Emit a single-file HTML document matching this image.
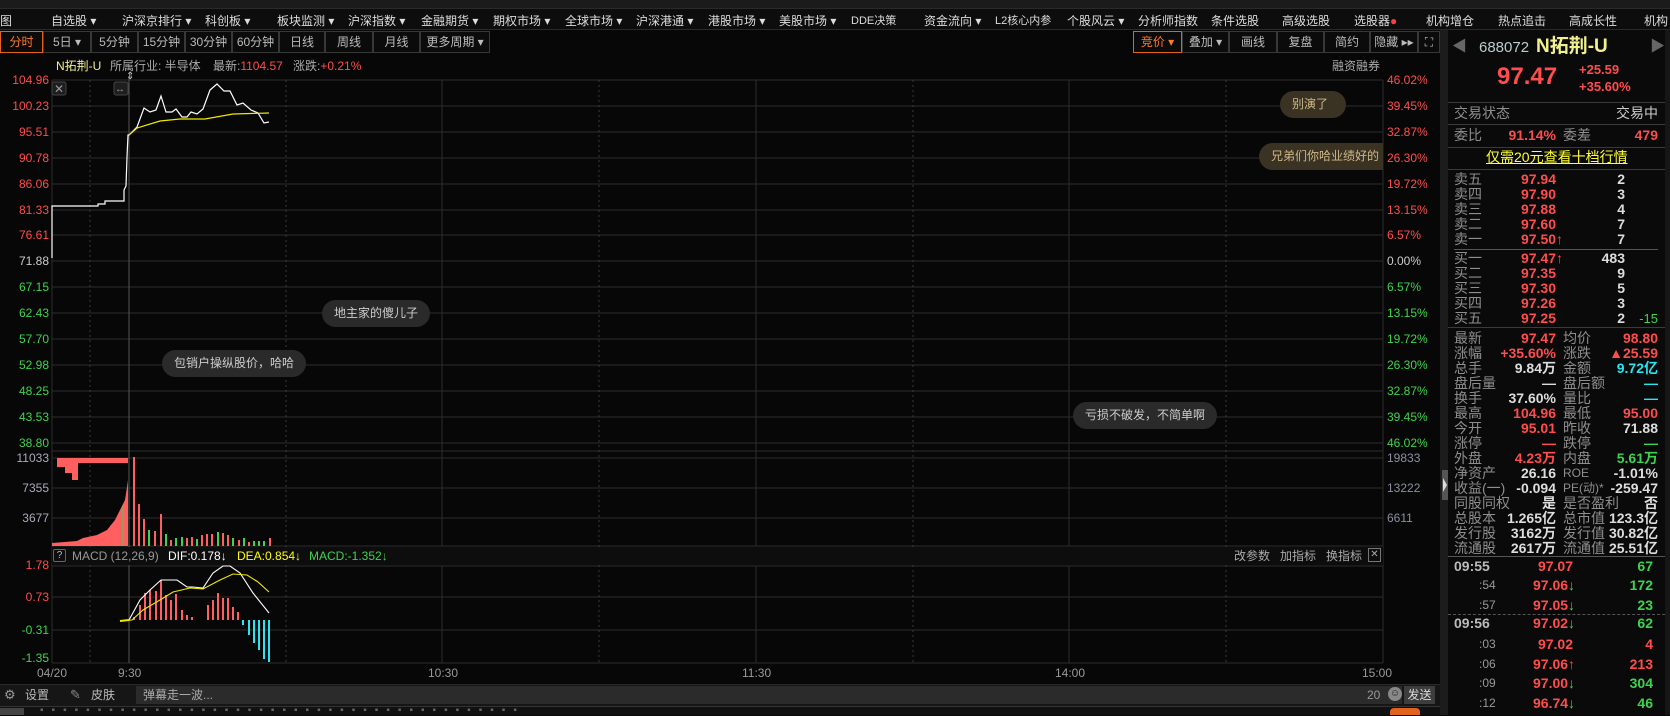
<!DOCTYPE html>
<html><head><meta charset="utf-8">
<style>
*{margin:0;padding:0;box-sizing:border-box}
body{width:1670px;height:715px;background:#070707;overflow:hidden;position:relative;font-family:"Liberation Sans","Noto Sans CJK SC",sans-serif;font-size:12px;color:#bbb}
.a{position:absolute;white-space:nowrap;line-height:14px}
.m{position:absolute;top:12px;color:#ddd;font-size:12px;white-space:nowrap}
.tb{position:absolute;top:31px;height:22px;border:1px solid #383838;color:#bbb;font-size:12px;text-align:center;line-height:20px;background:#0b0b0b}
.r{color:#ff4d4d}.g{color:#3ed34e}.w{color:#ddd}.y{color:#ffff00}.c{color:#27e6f2}.gr{color:#999}
.L{position:absolute;right:1621px;font-size:12px;line-height:14px;text-align:right}
.P{position:absolute;left:1387px;font-size:12px;line-height:14px}
.bub{position:absolute;height:27px;border-radius:14px;background:#2a2a2a;color:#ccc;font-size:12px;line-height:27px;padding:0 12px;white-space:nowrap;overflow:hidden}
.bb{background:#3a3223;color:#cdb888}
.rp{position:absolute;font-size:14px;line-height:15px;white-space:nowrap}
.lb{color:#8e8e8e;left:1454px}
.v1{right:114px;font-weight:bold}
.l2{color:#8e8e8e;left:1563px}
.v2{right:12px;font-weight:bold}
.tk{position:absolute;font-size:14px;font-weight:bold;line-height:16px;white-space:nowrap}
</style></head><body>
<div style="position:absolute;left:0;top:0;width:1670px;height:9px;background:#1b1b1b;border-bottom:1px solid #2a2a2a"></div>
<div style="position:absolute;left:0;top:9px;width:1670px;height:21px;background:#0d0d0d;border-bottom:1px solid #2a2a2a"></div>
<div class="m" style="left:0">图</div>
<div class="m" style="left:51px">自选股 ▾</div>
<div class="m" style="left:122px">沪深京排行 ▾</div>
<div class="m" style="left:205px">科创板 ▾</div>
<div class="m" style="left:277px">板块监测 ▾</div>
<div class="m" style="left:348px">沪深指数 ▾</div>
<div class="m" style="left:421px">金融期货 ▾</div>
<div class="m" style="left:493px">期权市场 ▾</div>
<div class="m" style="left:565px">全球市场 ▾</div>
<div class="m" style="left:636px">沪深港通 ▾</div>
<div class="m" style="left:708px">港股市场 ▾</div>
<div class="m" style="left:779px">美股市场 ▾</div>
<div class="m" style="left:851px;font-size:11px">DDE决策</div>
<div class="m" style="left:924px">资金流向 ▾</div>
<div class="m" style="left:995px;font-size:11px">L2核心内参</div>
<div class="m" style="left:1067px">个股风云 ▾</div>
<div class="m" style="left:1138px">分析师指数</div>
<div class="m" style="left:1211px">条件选股</div>
<div class="m" style="left:1282px">高级选股</div>
<div class="m" style="left:1354px">选股器<span style="color:#ff3b3b">●</span></div>
<div class="m" style="left:1426px">机构增仓</div>
<div class="m" style="left:1498px">热点追击</div>
<div class="m" style="left:1569px">高成长性</div>
<div class="m" style="left:1644px">机构</div>
<div class="tb" style="left:0;width:43px;border-color:#e2631c;color:#ff7a2a">分时</div>
<div class="tb" style="left:43px;width:48px">5日 ▾</div>
<div class="tb" style="left:91px;width:47px">5分钟</div>
<div class="tb" style="left:138px;width:47px">15分钟</div>
<div class="tb" style="left:185px;width:47px">30分钟</div>
<div class="tb" style="left:232px;width:47px">60分钟</div>
<div class="tb" style="left:279px;width:46px">日线</div>
<div class="tb" style="left:325px;width:48px">周线</div>
<div class="tb" style="left:373px;width:47px">月线</div>
<div class="tb" style="left:420px;width:70px">更多周期 ▾</div>
<div class="tb" style="left:1133px;width:49px;border-color:#e2631c;color:#ff7a2a">竞价 ▾</div>
<div class="tb" style="left:1182px;width:47px">叠加 ▾</div>
<div class="tb" style="left:1229px;width:48px">画线</div>
<div class="tb" style="left:1277px;width:47px">复盘</div>
<div class="tb" style="left:1324px;width:46px">简约</div>
<div class="tb" style="left:1370px;width:48px">隐藏 ▸▸</div>
<div class="tb" style="left:1418px;width:22px">⛶</div>
<div class="a" style="left:56px;top:59px;color:#f2f08a">N拓荆-U</div>
<div class="a" style="left:110px;top:59px;color:#aaa">所属行业: 半导体</div>
<div class="a" style="left:213px;top:59px;color:#aaa">最新:<span class="r">1104.57</span></div>
<div class="a" style="left:293px;top:59px;color:#aaa">涨跌:<span class="r">+0.21%</span></div>
<div class="a" style="left:1332px;top:59px;color:#aaa">融资融券</div>

<svg width="1670" height="715" style="position:absolute;left:0;top:0">
<g stroke="#2c2c2c" stroke-width="1" shape-rendering="crispEdges">
<line x1="52" y1="80" x2="1383" y2="80"/><line x1="52" y1="106" x2="1383" y2="106"/><line x1="52" y1="132" x2="1383" y2="132"/><line x1="52" y1="158" x2="1383" y2="158"/><line x1="52" y1="184" x2="1383" y2="184"/><line x1="52" y1="210" x2="1383" y2="210"/><line x1="52" y1="235" x2="1383" y2="235"/><line x1="52" y1="261" x2="1383" y2="261"/><line x1="52" y1="287" x2="1383" y2="287"/><line x1="52" y1="313" x2="1383" y2="313"/><line x1="52" y1="339" x2="1383" y2="339"/><line x1="52" y1="365" x2="1383" y2="365"/><line x1="52" y1="391" x2="1383" y2="391"/><line x1="52" y1="417" x2="1383" y2="417"/><line x1="52" y1="443" x2="1383" y2="443"/>
<line x1="52" y1="451" x2="1383" y2="451"/>
<line x1="52" y1="458" x2="1383" y2="458"/><line x1="52" y1="488" x2="1383" y2="488"/><line x1="52" y1="518" x2="1383" y2="518"/><line x1="52" y1="546" x2="1383" y2="546"/>
<line x1="52" y1="566" x2="1383" y2="566"/><line x1="52" y1="597" x2="1383" y2="597"/><line x1="52" y1="630" x2="1383" y2="630"/><line x1="52" y1="663" x2="1383" y2="663"/>
<line x1="52" y1="80" x2="52" y2="663"/><line x1="1383" y1="80" x2="1383" y2="663"/>
<line x1="442" y1="80" x2="442" y2="546"/><line x1="442" y1="566" x2="442" y2="663"/>
<line x1="756" y1="80" x2="756" y2="546"/><line x1="756" y1="566" x2="756" y2="663"/>
<line x1="1069" y1="80" x2="1069" y2="546"/><line x1="1069" y1="566" x2="1069" y2="663"/>
</g>
<g stroke="#3a3a3a" stroke-dasharray="2,3" stroke-width="1" shape-rendering="crispEdges">
<line x1="90" y1="80" x2="90" y2="663"/><line x1="286" y1="80" x2="286" y2="663"/><line x1="599" y1="80" x2="599" y2="663"/><line x1="913" y1="80" x2="913" y2="663"/><line x1="1226" y1="80" x2="1226" y2="663"/>
</g>
<line x1="129" y1="76" x2="129" y2="663" stroke="#555" shape-rendering="crispEdges"/>
<rect x="52" y="547" width="1331" height="18" fill="#0d0d0d"/>
<polyline fill="none" stroke="#fff" stroke-width="1.2" points="52,258 52,206 98,206 98,204 105,204 105,201 124,201 124,190 126,186 127,157 128,135 129,135 137,127 144,108 150,112 156,110 161,96 166,112 172,112 176,109 182,117 187,117 191,112 197,114 203,109 210,90 217,84 224,91 230,91 237,105 243,103 251,110 258,113 264,123 269,122"/>
<polyline fill="none" stroke="#f0e800" stroke-width="1.2" points="129,135 137,128 160,121 180,119 205,119 233,114 269,113"/>
<rect x="52" y="82" width="14" height="13" rx="2" fill="#1e1e1e" stroke="#444"/>
<text x="54" y="93" fill="#999" font-size="12">✕</text>
<rect x="114" y="82" width="14" height="13" rx="2" fill="#1e1e1e" stroke="#444"/>
<text x="115" y="92" fill="#999" font-size="10">↔</text>
<text x="126" y="79" fill="#ccc" font-size="10">⇕</text>
<polygon fill="#ff5f5f" points="57,458 128,458 128,463 78,463 78,480 72,480 72,473 65,473 65,467 57,467"/>
<polygon fill="#ff5f5f" points="52,546 52,543 77,541 83,538 97,535 107,530 115,520 120,510 125,500 127,487 128,480 128,546"/>
<line x1="123" y1="546" x2="123" y2="505" stroke="#3ed34e"/>
<g stroke-width="1.6" shape-rendering="crispEdges">
<line x1="134" y1="546" x2="134" y2="457" stroke="#ff5f5f"/><line x1="139" y1="546" x2="139" y2="504" stroke="#ff5f5f"/><line x1="144" y1="546" x2="144" y2="519" stroke="#ff5f5f"/><line x1="149" y1="546" x2="149" y2="530" stroke="#3ed34e"/><line x1="155" y1="546" x2="155" y2="531" stroke="#ff5f5f"/><line x1="161" y1="546" x2="161" y2="514" stroke="#ff5f5f"/><line x1="166" y1="546" x2="166" y2="534" stroke="#3ed34e"/><line x1="171" y1="546" x2="171" y2="540" stroke="#ff5f5f"/><line x1="176" y1="546" x2="176" y2="538" stroke="#3ed34e"/><line x1="182" y1="546" x2="182" y2="537" stroke="#3ed34e"/><line x1="187" y1="546" x2="187" y2="538" stroke="#ff5f5f"/><line x1="192" y1="546" x2="192" y2="537" stroke="#ff5f5f"/><line x1="197" y1="546" x2="197" y2="539" stroke="#3ed34e"/><line x1="202" y1="546" x2="202" y2="535" stroke="#ff5f5f"/><line x1="207" y1="546" x2="207" y2="534" stroke="#ff5f5f"/><line x1="212" y1="546" x2="212" y2="534" stroke="#ff5f5f"/><line x1="218" y1="546" x2="218" y2="532" stroke="#3ed34e"/><line x1="223" y1="546" x2="223" y2="533" stroke="#ff5f5f"/><line x1="228" y1="546" x2="228" y2="535" stroke="#ff5f5f"/><line x1="233" y1="546" x2="233" y2="538" stroke="#3ed34e"/><line x1="239" y1="546" x2="239" y2="540" stroke="#ff5f5f"/><line x1="244" y1="546" x2="244" y2="538" stroke="#3ed34e"/><line x1="249" y1="546" x2="249" y2="542" stroke="#ff5f5f"/><line x1="254" y1="546" x2="254" y2="541" stroke="#3ed34e"/><line x1="259" y1="546" x2="259" y2="541" stroke="#3ed34e"/><line x1="264" y1="546" x2="264" y2="541" stroke="#3ed34e"/><line x1="270" y1="546" x2="270" y2="538" stroke="#ff5f5f"/>
</g>
<g stroke-width="1.6" shape-rendering="crispEdges" stroke="#ff5f5f">
<line x1="134" y1="620" x2="134" y2="617"/><line x1="140" y1="620" x2="140" y2="605"/><line x1="145" y1="620" x2="145" y2="593"/><line x1="150" y1="620" x2="150" y2="590"/><line x1="156" y1="620" x2="156" y2="591"/><line x1="161" y1="620" x2="161" y2="580"/><line x1="166" y1="620" x2="166" y2="595"/><line x1="171" y1="620" x2="171" y2="600"/><line x1="176" y1="620" x2="176" y2="594"/><line x1="182" y1="620" x2="182" y2="610"/><line x1="187" y1="620" x2="187" y2="615"/><line x1="192" y1="620" x2="192" y2="617"/><line x1="208" y1="620" x2="208" y2="605"/><line x1="213" y1="620" x2="213" y2="600"/><line x1="218" y1="620" x2="218" y2="593"/><line x1="223" y1="620" x2="223" y2="598"/><line x1="228" y1="620" x2="228" y2="598"/><line x1="233" y1="620" x2="233" y2="607"/><line x1="238" y1="620" x2="238" y2="612"/>
</g>
<g stroke-width="1.6" shape-rendering="crispEdges" stroke="#27e6f2">
<line x1="243" y1="620" x2="243" y2="625"/><line x1="249" y1="620" x2="249" y2="635"/><line x1="254" y1="620" x2="254" y2="643"/><line x1="259" y1="620" x2="259" y2="650"/><line x1="264" y1="620" x2="264" y2="659"/><line x1="269" y1="620" x2="269" y2="662"/>
</g>
<polyline fill="none" stroke="#fff" stroke-width="1.1" points="129,620 140,600 150,590 161,580 177,580 187,587 193,587 203,588 213,573 223,566 230,566 240,573 253,593 269,613"/>
<polyline fill="none" stroke="#f0e800" stroke-width="1.1" points="120,621 132,620 143,610 160,600 173,592 190,588 203,589 220,580 233,574 247,575 258,582 269,592"/>
<line x1="120" y1="621" x2="129" y2="620" stroke="#f0e800" stroke-width="2"/>
<rect x="1440" y="30" width="8" height="685" fill="#1c1c1c"/>
<rect x="1442" y="470" width="6" height="30" fill="#555"/>
<polygon points="1443,478 1447,485 1443,492" fill="#ddd"/>
<rect x="1665" y="30" width="5" height="685" fill="#161616"/>
</svg>
<div class="a" style="left:53px;top:549px;width:13px;height:13px;border:1px solid #666;border-radius:2px;color:#bbb;font-size:10px;line-height:11px;text-align:center">?</div>
<div class="a" style="left:72px;top:549px;color:#999">MACD (12,26,9)</div>
<div class="a" style="left:168px;top:549px;color:#fff">DIF:0.178↓</div>
<div class="a" style="left:237px;top:549px;color:#ffff00">DEA:0.854↓</div>
<div class="a" style="left:309px;top:549px;color:#3ed34e">MACD:-1.352↓</div>
<div class="a" style="left:1234px;top:549px;color:#aaa">改参数</div>
<div class="a" style="left:1280px;top:549px;color:#aaa">加指标</div>
<div class="a" style="left:1326px;top:549px;color:#aaa">换指标</div>
<div class="a" style="left:1368px;top:548px;width:13px;height:14px;border:1px solid #777;color:#aaa;font-size:10px;text-align:center;line-height:12px">✕</div>
<div class="L r" style="top:73px">104.96</div>
<div class="L r" style="top:99px">100.23</div>
<div class="L r" style="top:125px">95.51</div>
<div class="L r" style="top:151px">90.78</div>
<div class="L r" style="top:177px">86.06</div>
<div class="L r" style="top:203px">81.33</div>
<div class="L r" style="top:228px">76.61</div>
<div class="L" style="top:254px;color:#ccc">71.88</div>
<div class="L g" style="top:280px">67.15</div>
<div class="L g" style="top:306px">62.43</div>
<div class="L g" style="top:332px">57.70</div>
<div class="L g" style="top:358px">52.98</div>
<div class="L g" style="top:384px">48.25</div>
<div class="L g" style="top:410px">43.53</div>
<div class="L g" style="top:436px">38.80</div>
<div class="L" style="top:451px;color:#aab">11033</div>
<div class="L" style="top:481px;color:#aab">7355</div>
<div class="L" style="top:511px;color:#aab">3677</div>
<div class="L r" style="top:558px">1.78</div>
<div class="L r" style="top:590px">0.73</div>
<div class="L g" style="top:623px">-0.31</div>
<div class="L g" style="top:651px">-1.35</div>
<div class="P r" style="top:73px">46.02%</div>
<div class="P r" style="top:99px">39.45%</div>
<div class="P r" style="top:125px">32.87%</div>
<div class="P r" style="top:151px">26.30%</div>
<div class="P r" style="top:177px">19.72%</div>
<div class="P r" style="top:203px">13.15%</div>
<div class="P r" style="top:228px">6.57%</div>
<div class="P" style="top:254px;color:#ccc">0.00%</div>
<div class="P g" style="top:280px">6.57%</div>
<div class="P g" style="top:306px">13.15%</div>
<div class="P g" style="top:332px">19.72%</div>
<div class="P g" style="top:358px">26.30%</div>
<div class="P g" style="top:384px">32.87%</div>
<div class="P g" style="top:410px">39.45%</div>
<div class="P g" style="top:436px">46.02%</div>
<div class="P" style="top:451px;color:#8a90a0">19833</div>
<div class="P" style="top:481px;color:#8a90a0">13222</div>
<div class="P" style="top:511px;color:#8a90a0">6611</div>
<div class="bub bb" style="left:1280px;top:91px;width:66px">别演了</div>
<div class="bub bb" style="left:1259px;top:143px;width:124px;border-radius:14px 0 0 14px">兄弟们你哈业绩好的</div>
<div class="bub" style="left:322px;top:300px">地主家的傻儿子</div>
<div class="bub" style="left:162px;top:350px">包销户操纵股价，哈哈</div>
<div class="bub" style="left:1073px;top:402px">亏损不破发，不简单啊</div>
<div class="a gr" style="left:37px;top:666px">04/20</div>
<div class="a gr" style="left:118px;top:666px">9:30</div>
<div class="a gr" style="left:428px;top:666px">10:30</div>
<div class="a gr" style="left:742px;top:666px">11:30</div>
<div class="a gr" style="left:1055px;top:666px">14:00</div>
<div class="a gr" style="left:1362px;top:666px">15:00</div>
<div style="position:absolute;left:0;top:684px;width:1440px;height:22px;background:#161616;border-top:1px solid #2a2a2a"></div>
<div class="a" style="left:4px;top:688px;color:#999;font-size:13px">⚙</div>
<div class="a" style="left:25px;top:688px;color:#bbb">设置</div>
<div class="a" style="left:70px;top:688px;color:#888;font-size:13px">✎</div>
<div class="a" style="left:91px;top:688px;color:#bbb">皮肤</div>
<div style="position:absolute;left:136px;top:686px;width:1266px;height:18px;background:#2b2b2b"></div>
<div class="a" style="left:143px;top:688px;color:#aaa">弹幕走一波...</div>
<div class="a" style="left:1367px;top:688px;color:#999">20</div>
<div style="position:absolute;left:1388px;top:687px;width:14px;height:14px;border-radius:7px;background:#888;color:#222;font-size:10px;line-height:14px;text-align:center">☺</div>
<div style="position:absolute;left:1404px;top:686px;width:31px;height:18px;background:#3d3d3d;color:#ddd;font-size:12px;line-height:18px;text-align:center">发送</div>
<div style="position:absolute;left:0;top:706px;width:1440px;height:9px;background:#111;border-top:1px solid #333"></div>
<div style="position:absolute;left:0;top:708px;width:24px;height:7px;background:#444"></div>
<div class="a" style="left:40px;top:706px;color:#666;font-size:10px;line-height:10px;letter-spacing:8px">▪▪▪▪▪▪▪▪▪▪▪▪▪▪▪▪▪▪▪▪▪▪▪▪▪▪▪▪▪▪▪▪▪▪▪▪▪▪▪▪▪▪</div>
<div style="position:absolute;left:1390px;top:708px;width:30px;height:7px;background:#e2631c;border-radius:4px 4px 0 0"></div>

<div style="position:absolute;left:1448px;top:30px;width:217px;height:685px;background:#0a0a0a"></div>
<div class="a" style="left:1452px;top:38px;color:#666;font-size:15px;line-height:18px">◀</div>
<div class="a" style="left:1479px;top:40px;color:#bcc;font-size:15px;line-height:16px">688072</div>
<div class="a" style="left:1536px;top:36px;color:#f2f08a;font-size:19px;line-height:22px;font-weight:bold">N拓荆-U</div>
<div class="a" style="left:1650px;top:38px;color:#666;font-size:15px;line-height:18px">▶</div>
<div class="a r" style="left:1497px;top:64px;font-size:24px;line-height:26px;font-weight:bold">97.47</div>
<div class="a r" style="left:1579px;top:63px;font-size:13px;font-weight:bold">+25.59</div>
<div class="a r" style="left:1579px;top:80px;font-size:13px;font-weight:bold">+35.60%</div>
<div style="position:absolute;left:1448px;top:102px;width:217px;border-top:1px solid #3a3a3a"></div>
<div class="rp lb" style="top:106px">交易状态</div>
<div class="rp" style="right:12px;top:106px;color:#ccc">交易中</div>
<div style="position:absolute;left:1448px;top:124px;width:217px;border-top:1px solid #3a3a3a"></div>
<div class="rp lb" style="top:128px">委比</div>
<div class="rp v1 r" style="top:128px">91.14%</div>
<div class="rp l2" style="top:128px">委差</div>
<div class="rp v2 r" style="top:128px">479</div>
<div style="position:absolute;left:1448px;top:147px;width:217px;border-top:1px solid #3a3a3a"></div>
<div class="rp" style="left:1486px;top:150px;color:#ffff30;text-decoration:underline">仅需20元查看十档行情</div>
<div style="position:absolute;left:1448px;top:169px;width:217px;border-top:1px solid #3a3a3a"></div>
<div class="rp lb" style="top:172px">卖五</div><div class="rp v1 r" style="top:172px">97.94</div><div class="rp w" style="right:45px;top:172px;font-weight:bold">2</div>
<div class="rp lb" style="top:187px">卖四</div><div class="rp v1 r" style="top:187px">97.90</div><div class="rp w" style="right:45px;top:187px;font-weight:bold">3</div>
<div class="rp lb" style="top:202px">卖三</div><div class="rp v1 r" style="top:202px">97.88</div><div class="rp w" style="right:45px;top:202px;font-weight:bold">4</div>
<div class="rp lb" style="top:217px">卖二</div><div class="rp v1 r" style="top:217px">97.60</div><div class="rp w" style="right:45px;top:217px;font-weight:bold">7</div>
<div class="rp lb" style="top:232px">卖一</div><div class="rp r" style="left:1521px;top:232px;font-weight:bold">97.50↑</div><div class="rp w" style="right:45px;top:232px;font-weight:bold">7</div>
<div style="position:absolute;left:1454px;top:249px;width:204px;border-top:1px solid #555"></div>
<div class="rp lb" style="top:251px">买一</div><div class="rp r" style="left:1521px;top:251px;font-weight:bold">97.47↑</div><div class="rp w" style="right:45px;top:251px;font-weight:bold">483</div>
<div class="rp lb" style="top:266px">买二</div><div class="rp v1 r" style="top:266px">97.35</div><div class="rp w" style="right:45px;top:266px;font-weight:bold">9</div>
<div class="rp lb" style="top:281px">买三</div><div class="rp v1 r" style="top:281px">97.30</div><div class="rp w" style="right:45px;top:281px;font-weight:bold">5</div>
<div class="rp lb" style="top:296px">买四</div><div class="rp v1 r" style="top:296px">97.26</div><div class="rp w" style="right:45px;top:296px;font-weight:bold">3</div>
<div class="rp lb" style="top:311px">买五</div><div class="rp v1 r" style="top:311px">97.25</div><div class="rp w" style="right:45px;top:311px;font-weight:bold">2</div><div class="rp g" style="right:12px;top:311px;font-size:13px">-15</div>
<div style="position:absolute;left:1448px;top:327px;width:217px;border-top:1px solid #3a3a3a"></div>
<div class="rp lb" style="top:331px">最新</div><div class="rp v1 r" style="top:331px">97.47</div><div class="rp l2" style="top:331px">均价</div><div class="rp v2 r" style="top:331px">98.80</div>
<div class="rp lb" style="top:346px">涨幅</div><div class="rp v1 r" style="top:346px">+35.60%</div><div class="rp l2" style="top:346px">涨跌</div><div class="rp v2 r" style="top:346px">▲25.59</div>
<div class="rp lb" style="top:361px">总手</div><div class="rp v1 w" style="top:361px">9.84万</div><div class="rp l2" style="top:361px">金额</div><div class="rp v2 c" style="top:361px">9.72亿</div>
<div class="rp lb" style="top:376px">盘后量</div><div class="rp v1 w" style="top:376px">—</div><div class="rp l2" style="top:376px">盘后额</div><div class="rp v2 c" style="top:376px">—</div>
<div class="rp lb" style="top:391px">换手</div><div class="rp v1 w" style="top:391px">37.60%</div><div class="rp l2" style="top:391px">量比</div><div class="rp v2 c" style="top:391px">—</div>
<div class="rp lb" style="top:406px">最高</div><div class="rp v1 r" style="top:406px">104.96</div><div class="rp l2" style="top:406px">最低</div><div class="rp v2 r" style="top:406px">95.00</div>
<div class="rp lb" style="top:421px">今开</div><div class="rp v1 r" style="top:421px">95.01</div><div class="rp l2" style="top:421px">昨收</div><div class="rp v2 w" style="top:421px">71.88</div>
<div class="rp lb" style="top:436px">涨停</div><div class="rp v1 r" style="top:436px">—</div><div class="rp l2" style="top:436px">跌停</div><div class="rp v2 g" style="top:436px">—</div>
<div class="rp lb" style="top:451px">外盘</div><div class="rp v1 r" style="top:451px">4.23万</div><div class="rp l2" style="top:451px">内盘</div><div class="rp v2 g" style="top:451px">5.61万</div>
<div class="rp lb" style="top:466px">净资产</div><div class="rp v1 w" style="top:466px">26.16</div><div class="rp l2" style="top:466px;font-size:12px">ROE</div><div class="rp v2 w" style="top:466px">-1.01%</div>
<div class="rp lb" style="top:481px">收益(一)</div><div class="rp v1 w" style="top:481px">-0.094</div><div class="rp l2" style="top:481px;font-size:12px">PE(动)*</div><div class="rp v2 w" style="top:481px">-259.47</div>
<div class="rp lb" style="top:496px">同股同权</div><div class="rp v1 w" style="top:496px">是</div><div class="rp l2" style="top:496px">是否盈利</div><div class="rp v2 w" style="top:496px">否</div>
<div class="rp lb" style="top:511px">总股本</div><div class="rp v1 w" style="top:511px">1.265亿</div><div class="rp l2" style="top:511px">总市值</div><div class="rp v2 w" style="top:511px">123.3亿</div>
<div class="rp lb" style="top:526px">发行股</div><div class="rp v1 w" style="top:526px">3162万</div><div class="rp l2" style="top:526px">发行值</div><div class="rp v2 w" style="top:526px">30.82亿</div>
<div class="rp lb" style="top:541px">流通股</div><div class="rp v1 w" style="top:541px">2617万</div><div class="rp l2" style="top:541px">流通值</div><div class="rp v2 w" style="top:541px">25.51亿</div>
<div style="position:absolute;left:1448px;top:556px;width:217px;border-top:1px solid #555"></div>
<div class="tk" style="left:1454px;top:558px;color:#bbb">09:55</div><div class="tk r" style="right:97px;top:558px">97.07</div><div class="tk g" style="right:17px;top:558px">67</div>
<div class="tk" style="left:1479px;top:577px;color:#999;font-weight:normal;font-size:12px">:54</div><div class="tk r" style="left:1533px;top:577px">97.06<span class="g">↓</span></div><div class="tk g" style="right:17px;top:577px">172</div>
<div class="tk" style="left:1479px;top:597px;color:#999;font-weight:normal;font-size:12px">:57</div><div class="tk r" style="left:1533px;top:597px">97.05<span class="g">↓</span></div><div class="tk g" style="right:17px;top:597px">23</div>
<div style="position:absolute;left:1448px;top:614px;width:217px;border-top:1px dashed #555"></div>
<div class="tk" style="left:1454px;top:615px;color:#bbb">09:56</div><div class="tk r" style="left:1533px;top:615px">97.02<span class="g">↓</span></div><div class="tk g" style="right:17px;top:615px">62</div>
<div class="tk" style="left:1479px;top:636px;color:#999;font-weight:normal;font-size:12px">:03</div><div class="tk r" style="right:97px;top:636px">97.02</div><div class="tk r" style="right:17px;top:636px">4</div>
<div class="tk" style="left:1479px;top:656px;color:#999;font-weight:normal;font-size:12px">:06</div><div class="tk r" style="left:1533px;top:656px">97.06↑</div><div class="tk r" style="right:17px;top:656px">213</div>
<div class="tk" style="left:1479px;top:675px;color:#999;font-weight:normal;font-size:12px">:09</div><div class="tk r" style="left:1533px;top:675px">97.00<span class="g">↓</span></div><div class="tk g" style="right:17px;top:675px">304</div>
<div class="tk" style="left:1479px;top:695px;color:#999;font-weight:normal;font-size:12px">:12</div><div class="tk r" style="left:1533px;top:695px">96.74<span class="g">↓</span></div><div class="tk g" style="right:17px;top:695px">46</div>
</body></html>
